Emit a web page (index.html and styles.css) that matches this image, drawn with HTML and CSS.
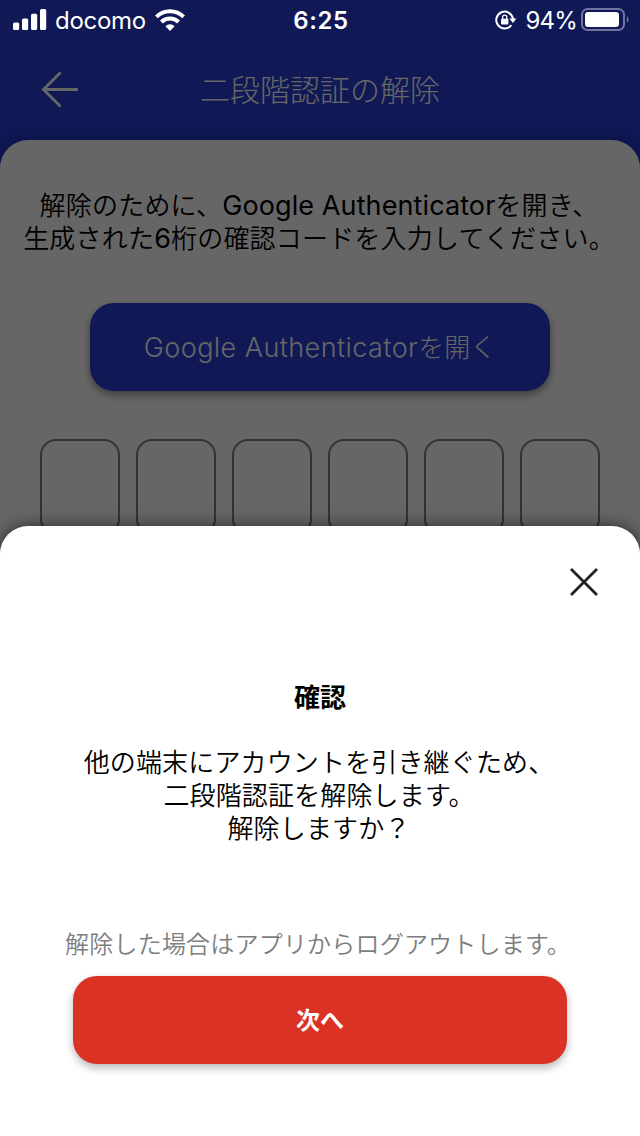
FILE: index.html
```
<!DOCTYPE html>
<html lang="ja">
<head>
    <meta charset="UTF-8">
    <meta name="viewport" content="width=device-width, initial-scale=1.0">
    <title>二段階認証の解除</title>
    <link rel="stylesheet" href="styles.css">
</head>
<body>
<div class="screen">
    <div class="status-bar">
        <div class="status-left">
            <svg class="signal" width="34" height="22" viewBox="0 0 34 22" fill="#fff">
                <rect x="0" y="13.5" width="6.2" height="7.5" rx="1.6"/>
                <rect x="9" y="9.5" width="6.2" height="11.5" rx="1.6"/>
                <rect x="18" y="4.7" width="6.2" height="16.3" rx="1.6"/>
                <rect x="27" y="0" width="6.2" height="21" rx="1.6"/>
            </svg>
            <span class="carrier">docomo</span>
            <svg class="wifi" width="30" height="22" viewBox="0 0 30 22">
                <g fill="none" stroke="#fff" stroke-width="4">
                    <path d="M1.4 7.9A19.3 19.3 0 0 1 28.6 7.9"/>
                    <path d="M6.4 13A12.2 12.2 0 0 1 23.6 13"/>
                </g>
                <path d="M10.4 17.2A6.5 6.5 0 0 1 19.6 17.2L15 22Z" fill="#fff"/>
            </svg>
        </div>
        <span class="time">6:25</span>
        <div class="status-right">
            <svg class="rotation-lock" width="22" height="20" viewBox="0 0 22 20">
                <path d="M16.3 15.2A8.4 8.4 0 1 1 18 9" fill="none" stroke="#fff" stroke-width="2"/>
                <path d="M14.3 8.6H21.4L17.9 13Z" fill="#fff"/>
                <rect x="6" y="8.7" width="7.4" height="5.8" rx="0.8" fill="#fff"/>
                <path d="M7.6 9V7.2a2.1 2.1 0 0 1 4.2 0V9" fill="none" stroke="#fff" stroke-width="1.3"/>
            </svg>
            <span class="percent">94%</span>
            <svg class="battery" width="48" height="24" viewBox="0 0 48 24">
                <rect x="1" y="1" width="42" height="21" rx="5.5" fill="none" stroke="#7074a0" stroke-width="2"/>
                <rect x="4" y="4" width="34" height="15" rx="3" fill="#fff"/>
                <path d="M45.8 8V15Q47.6 13.7 47.6 11.5T45.8 8Z" fill="#7074a0"/>
            </svg>
        </div>
    </div>

    <div class="header">
        <svg class="back" width="38" height="38" viewBox="0 0 38 38">
            <path d="M19.5 1.5L2.5 18.5L19.5 35.5M2.5 18.5H37" fill="none" stroke="#fff" stroke-width="2.8"/>
        </svg>
        <h1 class="title">二段階認証の解除</h1>
    </div>

    <div class="content">
        <p class="description">解除のために、<span class="latin">Google Authenticator</span>を開き、<br>生成された<span class="latin">6</span>桁の確認コードを入力してください。</p>
        <button class="open-button"><span class="latin">Google Authenticator</span>を開く</button>
        <div class="code-inputs">
            <div class="code-box"></div>
            <div class="code-box"></div>
            <div class="code-box"></div>
            <div class="code-box"></div>
            <div class="code-box"></div>
            <div class="code-box"></div>
        </div>
    </div>

    <div class="overlay"></div>

    <div class="sheet">
        <svg class="close" width="30" height="30" viewBox="0 0 30 30">
            <path d="M2 2L28 28M28 2L2 28" fill="none" stroke="#222" stroke-width="2.8"/>
        </svg>
        <h2 class="sheet-title">確認</h2>
        <p class="sheet-text">他の端末にアカウントを引き継ぐため、<br>二段階認証を解除します。<br>解除しますか？</p>
        <p class="sheet-note">解除した場合はアプリからログアウトします。</p>
        <button class="next-button">次へ</button>
    </div>
</div>
</body>
</html>
```
FILE: styles.css
```
* {
    box-sizing: border-box;
}
body {
    margin: 0;
    font-family: "Noto Sans CJK JP", sans-serif;
    color: #000;
}
h1, h2, p {
    margin: 0;
}
button {
    border: none;
    padding: 0;
    font-family: inherit;
}
svg {
    display: block;
}
.screen {
    position: relative;
    width: 640px;
    height: 1136px;
    overflow: hidden;
    background-color: #283cd7;
}
.latin {
    font-family: Inter, sans-serif;
    font-size: 27px;
    font-weight: 400;
    line-height: 1;
    letter-spacing: 0.1px;
}

/* ステータスバー */
.status-bar {
    position: relative;
    z-index: 3;
    display: grid;
    grid-template-columns: 1fr auto 1fr;
    align-items: center;
    height: 40px;
    padding: 0 11px 0 13px;
    font-family: Inter, sans-serif;
    font-size: 24px;
    color: #fff;
}
.status-left, .status-right {
    display: flex;
    align-items: center;
}
.status-right {
    justify-content: flex-end;
}
.carrier {
    margin-left: 8px;
    padding-top: 1px;
    letter-spacing: -0.3px;
}
.wifi {
    margin-left: 9px;
}
.time {
    padding-top: 1px;
    font-weight: 600;
    letter-spacing: 0.6px;
}
.percent {
    margin: 0 4px 0 8px;
    padding-top: 1px;
    letter-spacing: -0.8px;
}

/* ヘッダー */
.header {
    display: grid;
    grid-template-columns: 80px 1fr 80px;
    align-items: center;
    height: 100px;
}
.back {
    margin-left: 41px;
}
.title {
    padding-bottom: 4px;
    text-align: center;
    font-size: 30px;
    font-weight: 300;
    color: #fff;
}

.content {
    height: 996px;
    padding: 47px 0 0;
    border-radius: 28px 28px 0 0;
    background-color: #fff;
    box-shadow: 0 0 16px rgba(0, 0, 0, 0.25);
    text-align: center;
}
.description {
    height: 68px;
    padding-right: 2px;
    font-size: 26px;
    font-weight: 350;
    line-height: 33px;
    letter-spacing: 0.2px;
    white-space: nowrap;
}
.open-button {
    display: block;
    width: 460px;
    height: 88px;
    margin: 48px auto 0;
    padding-bottom: 4px;
    border-radius: 24px;
    background-color: #283cd7;
    box-shadow: 0 4px 8px rgba(0, 0, 0, 0.4);
    font-size: 26px;
    font-weight: 300;
    color: #fff;
}
.open-button .latin {
    font-weight: 350;
    letter-spacing: 0.45px;
}
.code-inputs {
    display: flex;
    justify-content: center;
    gap: 16px;
    margin-top: 48px;
}
.code-box {
    width: 80px;
    height: 96px;
    border: 2px solid #808080;
    border-radius: 16px;
}

.overlay {
    position: absolute;
    inset: 0;
    z-index: 1;
    background-color: rgba(0, 0, 0, 0.6);
}

/* 確認シート */
.sheet {
    position: absolute;
    left: 0;
    right: 0;
    bottom: 0;
    z-index: 2;
    display: flex;
    flex-direction: column;
    align-items: center;
    height: 610px;
    padding-top: 41px;
    border-radius: 28px 28px 0 0;
    background-color: #fff;
    box-shadow: 0 0 16px rgba(0, 0, 0, 0.6);
    text-align: center;
}
.close {
    align-self: flex-end;
    margin-right: 41px;
}
.sheet-title {
    margin-top: 80px;
    font-size: 26px;
    line-height: 38px;
    font-weight: 700;
}
.sheet-text {
    margin-top: 29px;
    padding-right: 2px;
    font-size: 26px;
    font-weight: 350;
    line-height: 33px;
    letter-spacing: 0.15px;
}
.sheet-note {
    margin-top: 82px;
    padding-right: 4px;
    font-size: 24px;
    font-weight: 350;
    line-height: 36px;
    letter-spacing: 0.2px;
    color: #7c7e80;
}
.next-button {
    width: 494px;
    height: 88px;
    margin-top: 15px;
    padding-bottom: 3px;
    border-radius: 24px;
    background-color: #db3226;
    box-shadow: 0 4px 8px rgba(0, 0, 0, 0.28);
    font-size: 24px;
    font-weight: 700;
    color: #fff;
}
```
